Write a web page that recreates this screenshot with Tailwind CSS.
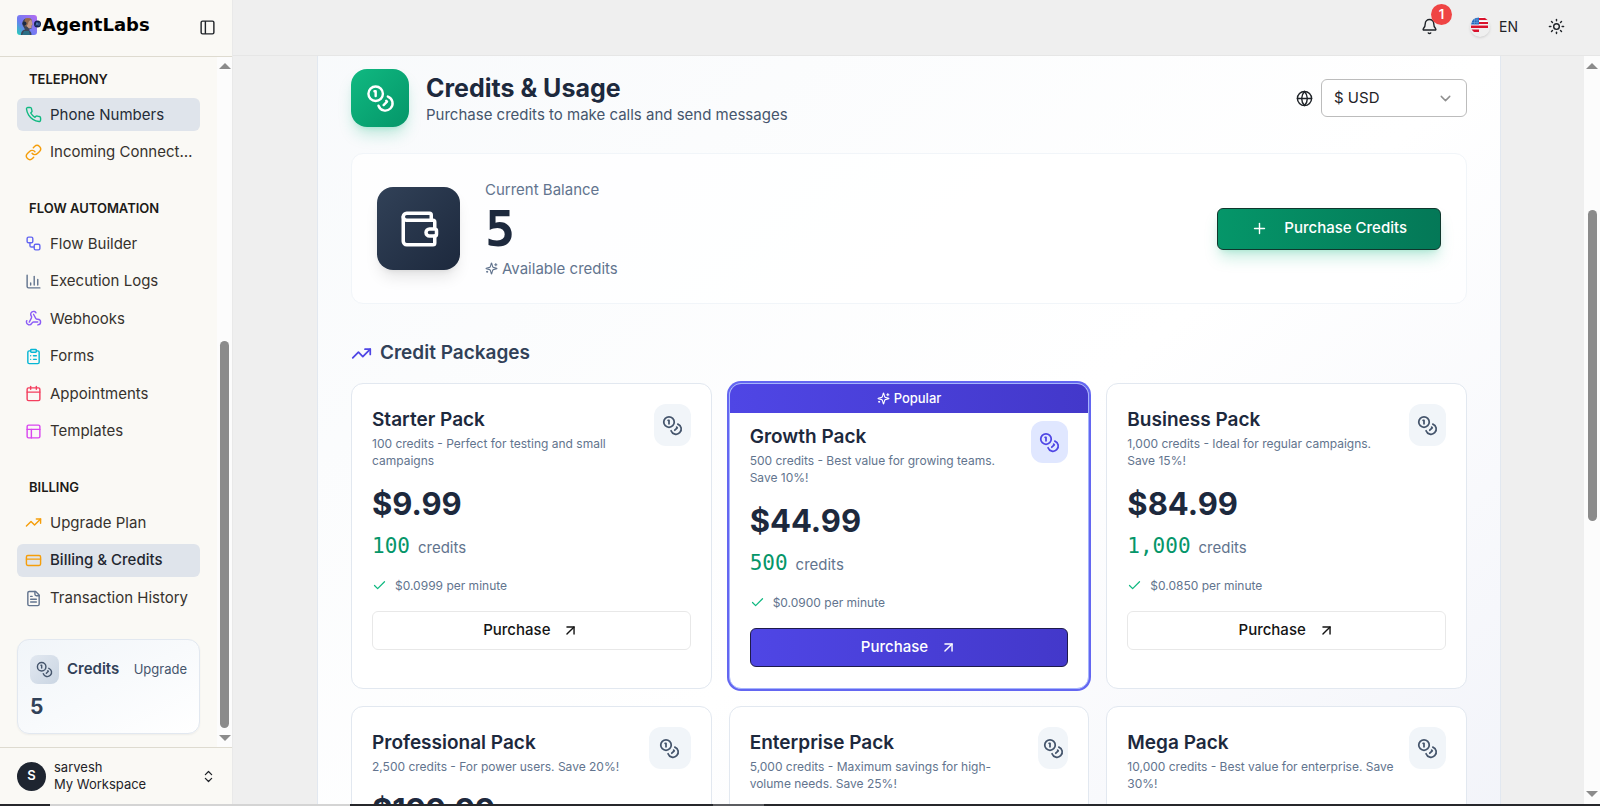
<!DOCTYPE html>
<html lang="en">
<head>
    <meta charset="UTF-8">
    <meta name="viewport" content="width=device-width, initial-scale=1.0">
    <title>AgentLabs - Billing &amp; Credits</title>
    <script src="https://cdn.jsdelivr.net/npm/@tailwindcss/browser@4"></script>
</head>
<body class="h-screen flex flex-col overflow-hidden bg-[#efefef] font-['Inter',sans-serif] text-[15px] text-[#1f2328]">

    <!-- Icons -->
    <svg class="hidden" xmlns="http://www.w3.org/2000/svg">
        <symbol id="coins" viewBox="0 0 24 24"><circle cx="8" cy="8" r="6"/><path d="M18.09 10.37A6 6 0 1 1 10.34 18"/><path d="M7 6h1v4"/><path d="m16.71 13.88.7.71-2.82 2.82"/></symbol>
        <symbol id="sparkles" viewBox="0 0 24 24"><path d="M9.937 15.5A2 2 0 0 0 8.5 14.063l-6.135-1.582a.5.5 0 0 1 0-.962L8.5 9.936A2 2 0 0 0 9.937 8.5l1.582-6.135a.5.5 0 0 1 .963 0L14.063 8.5A2 2 0 0 0 15.5 9.937l6.135 1.581a.5.5 0 0 1 0 .964L15.5 14.063a2 2 0 0 0-1.437 1.437l-1.582 6.135a.5.5 0 0 1-.963 0z"/><path d="M20 3v4"/><path d="M22 5h-4"/><path d="M4 17v2"/><path d="M5 18H3"/></symbol>
        <symbol id="wallet" viewBox="0 0 24 24"><path d="M19 7V4a1 1 0 0 0-1-1H5a2 2 0 0 0 0 4h15a1 1 0 0 1 1 1v4h-3a2 2 0 0 0 0 4h3a1 1 0 0 0 1-1v-2a1 1 0 0 0-1-1"/><path d="M3 5v14a2 2 0 0 0 2 2h15a1 1 0 0 0 1-1v-4"/></symbol>
        <symbol id="phone" viewBox="0 0 24 24"><path d="M22 16.92v3a2 2 0 0 1-2.18 2 19.79 19.79 0 0 1-8.63-3.07 19.5 19.5 0 0 1-6-6 19.79 19.79 0 0 1-3.07-8.67A2 2 0 0 1 4.11 2h3a2 2 0 0 1 2 1.72 12.84 12.84 0 0 0 .7 2.81 2 2 0 0 1-.45 2.11L8.09 9.91a16 16 0 0 0 6 6l1.27-1.27a2 2 0 0 1 2.11-.45 12.84 12.84 0 0 0 2.81.7A2 2 0 0 1 22 16.92z"/></symbol>
        <symbol id="link" viewBox="0 0 24 24"><path d="M10 13a5 5 0 0 0 7.54.54l3-3a5 5 0 0 0-7.07-7.07l-1.72 1.71"/><path d="M14 11a5 5 0 0 0-7.54-.54l-3 3a5 5 0 0 0 7.07 7.07l1.71-1.71"/></symbol>
        <symbol id="workflow" viewBox="0 0 24 24"><rect x="3" y="3" width="8" height="8" rx="2"/><path d="M7 11v4a2 2 0 0 0 2 2h4"/><rect x="13" y="13" width="8" height="8" rx="2"/></symbol>
        <symbol id="chart" viewBox="0 0 24 24"><path d="M3 3v16a2 2 0 0 0 2 2h16"/><path d="M18 17V9"/><path d="M13 17V5"/><path d="M8 17v-3"/></symbol>
        <symbol id="webhook" viewBox="0 0 24 24"><path d="M18 16.98h-5.99c-1.1 0-1.95.94-2.48 1.9A4 4 0 0 1 2 17c.01-.7.2-1.4.57-2"/><path d="m6 17 3.13-5.78c.53-.97.1-2.18-.5-3.1a4 4 0 1 1 6.89-4.06"/><path d="m12 6 3.13 5.73C15.66 12.7 16.9 13 18 13a4 4 0 0 1 0 8"/></symbol>
        <symbol id="clipboard" viewBox="0 0 24 24"><rect x="8" y="2" width="8" height="4" rx="1"/><path d="M16 4h2a2 2 0 0 1 2 2v14a2 2 0 0 1-2 2H6a2 2 0 0 1-2-2V6a2 2 0 0 1 2-2h2"/><path d="M12 11h4"/><path d="M12 16h4"/><path d="M8 11h.01"/><path d="M8 16h.01"/></symbol>
        <symbol id="calendar" viewBox="0 0 24 24"><path d="M8 2v4"/><path d="M16 2v4"/><rect x="3" y="4" width="18" height="18" rx="2"/><path d="M3 10h18"/></symbol>
        <symbol id="template" viewBox="0 0 24 24"><rect x="3" y="3" width="18" height="18" rx="2"/><path d="M3 9h18"/><path d="M9 21V9"/></symbol>
        <symbol id="trending" viewBox="0 0 24 24"><path d="M22 7 13.5 15.5 8.5 10.5 2 17"/><path d="M16 7h6v6"/></symbol>
        <symbol id="card" viewBox="0 0 24 24"><rect x="2" y="5" width="20" height="14" rx="2"/><path d="M2 10h20"/></symbol>
        <symbol id="file" viewBox="0 0 24 24"><path d="M15 2H6a2 2 0 0 0-2 2v16a2 2 0 0 0 2 2h12a2 2 0 0 0 2-2V7Z"/><path d="M14 2v4a2 2 0 0 0 2 2h4"/><path d="M10 9H8"/><path d="M16 13H8"/><path d="M16 17H8"/></symbol>
        <symbol id="panel" viewBox="0 0 24 24"><rect x="3" y="3" width="18" height="18" rx="2"/><path d="M9 3v18"/></symbol>
        <symbol id="updown" viewBox="0 0 24 24"><path d="m7 15 5 5 5-5"/><path d="m7 9 5-5 5 5"/></symbol>
        <symbol id="bell" viewBox="0 0 24 24"><path d="M10.268 21a2 2 0 0 0 3.464 0"/><path d="M3.262 15.326A1 1 0 0 0 4 17h16a1 1 0 0 0 .74-1.673C19.41 13.956 18 12.499 18 8A6 6 0 0 0 6 8c0 4.499-1.411 5.956-2.738 7.326"/></symbol>
        <symbol id="sun" viewBox="0 0 24 24"><circle cx="12" cy="12" r="4"/><path d="M12 2v2"/><path d="M12 20v2"/><path d="m4.93 4.93 1.41 1.41"/><path d="m17.66 17.66 1.41 1.41"/><path d="M2 12h2"/><path d="M20 12h2"/><path d="m6.34 17.66-1.41 1.41"/><path d="m19.07 4.93-1.41 1.41"/></symbol>
        <symbol id="globe" viewBox="0 0 24 24"><circle cx="12" cy="12" r="10"/><path d="M12 2a14.5 14.5 0 0 0 0 20 14.5 14.5 0 0 0 0-20"/><path d="M2 12h20"/></symbol>
        <symbol id="chevron" viewBox="0 0 24 24"><path d="m6 9 6 6 6-6"/></symbol>
        <symbol id="plus" viewBox="0 0 24 24"><path d="M5 12h14"/><path d="M12 5v14"/></symbol>
        <symbol id="check" viewBox="0 0 24 24"><path d="M20 6 9 17l-5-5"/></symbol>
        <symbol id="arrow" viewBox="0 0 24 24"><path d="M7 7h10v10"/><path d="M7 17 17 7"/></symbol>
        <symbol id="tri-up" viewBox="0 0 12 6"><path d="M0 6 6 0l6 6z"/></symbol>
        <symbol id="tri-down" viewBox="0 0 12 6"><path d="M0 0h12L6 6z"/></symbol>
    </svg>

    <div class="flex-1 min-h-0 flex">

        <!-- Sidebar -->
        <aside class="w-[233px] shrink-0 flex flex-col bg-[#faf9f5] border-r border-[#e9e9e9]">
            <div class="h-[57px] shrink-0 flex items-center justify-between pl-[17px] pr-4 pb-[2px] border-b border-[#dedbd0]">
                <a href="#" class="flex items-center gap-1 pb-1">
                    <svg class="w-[25px] h-5 -mr-1" viewBox="0 0 25 20">
                        <defs>
                            <linearGradient id="logo-bg" x1="0" y1="1" x2="1" y2="0">
                                <stop offset="0" stop-color="#22d3b6"/>
                                <stop offset=".4" stop-color="#6d7df2"/>
                                <stop offset="1" stop-color="#b46bf0"/>
                            </linearGradient>
                        </defs>
                        <rect width="20" height="20" rx="3" fill="url(#logo-bg)"/>
                        <path d="M4 20c0-4 2-5 4-5.500L6 11c-2-4 1-8 4.500-8S15.500 5 15 8l.5 2-1 .5v3l-2 .5v2c1.500.5 2 2 2 4z" fill="#3d4658"/>
                        <path d="M8 4c3-2 7-.5 7 3l.5 3-1 .5v2.500l-2.500.5L9.500 11z" fill="#c69a86"/>
                        <path d="M8 4c2-2 6-1 6.500 1-2 0-3 1-3.500 4l-2 3-2-3z" fill="#94694b"/>
                        <circle cx="7.500" cy="8.500" r="2" fill="#1d2a44"/>
                        <path d="M7 16h5l1 4H5z" fill="#2b6f86"/>
                        <circle cx="20.500" cy="9" r="3.500" fill="#14224f"/>
                        <path d="M19 10.500l1-3 1 3M22 7.500v3" fill="none" stroke="#6fa8e8" stroke-width=".7"/>
                    </svg>
                    <span class="text-[18px] leading-5 font-bold text-black font-['DejaVu_Sans',sans-serif]">AgentLabs</span>
                </a>
                <button type="button" aria-label="Toggle sidebar">
                    <svg class="size-[17px] fill-none stroke-current stroke-2"><use href="#panel"/></svg>
                </button>
            </div>

            <div class="flex-1 min-h-0 flex">
                <nav class="flex-1 min-w-0 overflow-hidden flex flex-col gap-[22px] px-[17px] pt-[7px] text-[#36322d]">
                    <section>
                        <h3 class="h-8 flex items-center px-3 text-[13px] font-semibold text-[#1c1b18]">TELEPHONY</h3>
                        <ul class="h-[75px] grid grid-cols-1 items-center">
                            <li><a href="#" class="h-[33px] flex items-center gap-2 pl-2 pr-1 rounded-md bg-[#dfe4eb] text-[#252c37]"><svg class="size-[17px] shrink-0 fill-none stroke-[#10b981] stroke-2" stroke-linecap="round" stroke-linejoin="round"><use href="#phone"/></svg><span>Phone Numbers</span></a></li>
                            <li><a href="#" class="h-[33px] flex items-center gap-2 pl-2 pr-1 rounded-md"><svg class="size-[17px] shrink-0 fill-none stroke-[#f59e0b] stroke-2" stroke-linecap="round" stroke-linejoin="round"><use href="#link"/></svg><span class="truncate">Incoming Connections</span></a></li>
                        </ul>
                    </section>
                    <section>
                        <h3 class="h-8 flex items-center px-3 text-[13px] font-semibold text-[#1c1b18]">FLOW AUTOMATION</h3>
                        <ul class="h-[225px] grid grid-cols-1 items-center">
                            <li><a href="#" class="h-[33px] flex items-center gap-2 pl-2 pr-1 rounded-md"><svg class="size-[17px] shrink-0 fill-none stroke-[#6366f1] stroke-2" stroke-linecap="round" stroke-linejoin="round"><use href="#workflow"/></svg><span>Flow Builder</span></a></li>
                            <li><a href="#" class="h-[33px] flex items-center gap-2 pl-2 pr-1 rounded-md"><svg class="size-[17px] shrink-0 fill-none stroke-slate-500 stroke-2" stroke-linecap="round" stroke-linejoin="round"><use href="#chart"/></svg><span>Execution Logs</span></a></li>
                            <li><a href="#" class="h-[33px] flex items-center gap-2 pl-2 pr-1 rounded-md"><svg class="size-[17px] shrink-0 fill-none stroke-[#8b5cf6] stroke-2" stroke-linecap="round" stroke-linejoin="round"><use href="#webhook"/></svg><span>Webhooks</span></a></li>
                            <li><a href="#" class="h-[33px] flex items-center gap-2 pl-2 pr-1 rounded-md"><svg class="size-[17px] shrink-0 fill-none stroke-[#06b6d4] stroke-2" stroke-linecap="round" stroke-linejoin="round"><use href="#clipboard"/></svg><span>Forms</span></a></li>
                            <li><a href="#" class="h-[33px] flex items-center gap-2 pl-2 pr-1 rounded-md"><svg class="size-[17px] shrink-0 fill-none stroke-[#f43f5e] stroke-2" stroke-linecap="round" stroke-linejoin="round"><use href="#calendar"/></svg><span>Appointments</span></a></li>
                            <li><a href="#" class="h-[33px] flex items-center gap-2 pl-2 pr-1 rounded-md"><svg class="size-[17px] shrink-0 fill-none stroke-[#d946ef] stroke-2" stroke-linecap="round" stroke-linejoin="round"><use href="#template"/></svg><span>Templates</span></a></li>
                        </ul>
                    </section>
                    <section>
                        <h3 class="h-8 flex items-center px-3 text-[13px] font-semibold text-[#1c1b18]">BILLING</h3>
                        <ul class="h-[113px] grid grid-cols-1 items-center">
                            <li><a href="#" class="h-[33px] flex items-center gap-2 pl-2 pr-1 rounded-md"><svg class="size-[17px] shrink-0 fill-none stroke-[#f59e0b] stroke-2" stroke-linecap="round" stroke-linejoin="round"><use href="#trending"/></svg><span>Upgrade Plan</span></a></li>
                            <li><a href="#" class="h-[33px] flex items-center gap-2 pl-2 pr-1 rounded-md bg-[#dfe4eb] text-[#1f2630] font-medium"><svg class="size-[17px] shrink-0 fill-none stroke-[#f59e0b] stroke-2" stroke-linecap="round" stroke-linejoin="round"><use href="#card"/></svg><span>Billing &amp; Credits</span></a></li>
                            <li><a href="#" class="h-[33px] flex items-center gap-2 pl-2 pr-1 rounded-md"><svg class="size-[17px] shrink-0 fill-none stroke-slate-500 stroke-2" stroke-linecap="round" stroke-linejoin="round"><use href="#file"/></svg><span>Transaction History</span></a></li>
                        </ul>
                    </section>

                    <div class="h-[95px] shrink-0 px-3 pt-[15px] rounded-xl border border-slate-200 bg-linear-to-br from-slate-100 to-white shadow-xs text-slate-700">
                        <div class="flex items-center">
                            <span class="size-[29px] flex items-center justify-center rounded-lg bg-linear-to-br from-slate-200 to-slate-300">
                                <svg class="size-[17px] fill-none stroke-slate-600 stroke-2" stroke-linecap="round" stroke-linejoin="round"><use href="#coins"/></svg>
                            </span>
                            <span class="ml-2 font-semibold">Credits</span>
                            <a href="#" class="ml-auto text-[13px] text-slate-600">Upgrade</a>
                        </div>
                        <p class="mt-[9px] text-[21px] leading-7 font-bold">5</p>
                    </div>
                </nav>

                <!-- Sidebar scrollbar -->
                <div class="w-[15px] flex flex-col items-center py-[6px] bg-[#fcfcfc]">
                    <svg class="w-3 h-[6px] fill-[#8b8b8b]"><use href="#tri-up"/></svg>
                    <div class="w-[9px] h-[387px] mt-auto mb-[7px] rounded-full bg-[#8b8b8b]"></div>
                    <svg class="w-3 h-[6px] fill-[#8b8b8b]"><use href="#tri-down"/></svg>
                </div>
            </div>

            <button type="button" class="h-[57px] shrink-0 flex items-center gap-2 pl-[17px] pr-4 border-t border-[#dedbd0] text-left">
                <span class="size-[29px] flex items-center justify-center rounded-full bg-[#1e2530] text-white text-[13px] font-semibold">S</span>
                <span class="flex-1 text-[13px] leading-[17px]">
                    <span class="block">sarvesh</span>
                    <span class="block">My Workspace</span>
                </span>
                <svg class="size-[15px] fill-none stroke-current stroke-2" stroke-linecap="round" stroke-linejoin="round"><use href="#updown"/></svg>
            </button>
        </aside>

        <div class="flex-1 min-w-0 flex flex-col">

            <!-- Top bar -->
            <header class="h-14 shrink-0 flex items-center justify-end pr-[35px] pb-[2px] border-b border-[#e6e6e6]">
                <button type="button" aria-label="Notifications" class="relative">
                    <svg class="size-[17px] fill-none stroke-current stroke-2" stroke-linecap="round" stroke-linejoin="round"><use href="#bell"/></svg>
                    <span class="absolute -top-[14px] left-[10px] size-[21px] flex items-center justify-center rounded-full bg-[#ef4444] text-white text-[13px] font-semibold">1</span>
                </button>
                <button type="button" class="ml-8 flex items-center gap-[9px] text-[14px]">
                    <span class="size-5 flex rounded-full shadow-sm">
                        <svg class="size-5" viewBox="0 0 20 20">
                            <path d="M1 8a9 9 0 0 1 8-8h4l4 3H9v1h8.500l.5 3H9v1h9v3H1z" fill="#fff"/>
                            <path d="M1 7.500Q2 .5 9 .5v7z" fill="#2468bd"/>
                            <path d="M3.500 3H9M2 5.500h7M4.500 2v5.500M7 1v6.500" stroke="#6fa5dc" stroke-width=".6"/>
                            <path d="M9 1h6l2.500 2H9zM9 5h9v2H9zM1 8.500h17v2.500H1zM1.500 12.500H9V15H4z" fill="#d9122c"/>
                        </svg>
                    </span>
                    <span>EN</span>
                </button>
                <button type="button" aria-label="Toggle theme" class="ml-[30px]">
                    <svg class="size-[17px] fill-none stroke-current stroke-2" stroke-linecap="round" stroke-linejoin="round"><use href="#sun"/></svg>
                </button>
            </header>

            <div class="flex-1 min-h-0 flex">
                <main class="flex-1 min-w-0 overflow-hidden pl-[84px] pr-[83px]">
                    <div class="px-[33px] pt-[13px] pb-8 border-x border-slate-200 bg-linear-to-br from-slate-50 via-white to-[#eff1f8]">

                        <!-- Title -->
                        <div class="flex items-center justify-between">
                            <div class="flex items-center gap-[17px]">
                                <span class="size-[58px] flex items-center justify-center rounded-2xl bg-linear-to-br from-[#10b981] to-[#059669] shadow-lg shadow-[#10b981]/25">
                                    <svg class="size-[29px] fill-none stroke-white stroke-2" stroke-linecap="round" stroke-linejoin="round"><use href="#coins"/></svg>
                                </span>
                                <div>
                                    <h1 class="text-[25px] leading-8 font-bold text-slate-800">Credits &amp; Usage</h1>
                                    <p class="leading-[21px] text-slate-600">Purchase credits to make calls and send messages</p>
                                </div>
                            </div>
                            <div class="flex items-center gap-2">
                                <label for="currency" aria-label="Currency">
                                    <svg class="size-[17px] fill-none stroke-current stroke-2" stroke-linecap="round" stroke-linejoin="round"><use href="#globe"/></svg>
                                </label>
                                <div class="relative">
                                    <select id="currency" class="w-[146px] h-[38px] pl-3 appearance-none rounded-md border border-[#bcbcbc] bg-white">
                                        <option>$ USD</option>
                                    </select>
                                    <svg class="absolute right-[13px] top-[11px] size-[17px] pointer-events-none fill-none stroke-[#8f8f8f] stroke-2" stroke-linecap="round" stroke-linejoin="round"><use href="#chevron"/></svg>
                                </div>
                            </div>
                        </div>

                        <!-- Balance -->
                        <div class="mt-[26px] h-[151px] px-[25px] flex items-center gap-[25px] rounded-xl border border-slate-100 bg-white/80">
                            <span class="size-[83px] flex items-center justify-center rounded-2xl bg-linear-to-br from-slate-700 to-slate-800 shadow-lg">
                                <svg class="size-[42px] fill-none stroke-white stroke-2" stroke-linecap="round" stroke-linejoin="round"><use href="#wallet"/></svg>
                            </span>
                            <div class="text-slate-500">
                                <p class="leading-[21px]">Current Balance</p>
                                <p class="py-1 text-[50px] leading-[50px] font-bold text-slate-800 font-['DejaVu_Sans_Mono',monospace]">5</p>
                                <p class="flex items-center gap-1 leading-[21px]"><svg class="size-[13px] fill-none stroke-current stroke-2" stroke-linecap="round" stroke-linejoin="round"><use href="#sparkles"/></svg>Available credits</p>
                            </div>
                            <button type="button" class="ml-auto h-[42px] px-[33px] flex items-center gap-4 rounded-md border border-[#10372d] bg-linear-to-r from-[#059669] to-[#047857] shadow-lg shadow-[#10b981]/25 text-white font-medium">
                                <svg class="size-[17px] fill-none stroke-current stroke-2" stroke-linecap="round"><use href="#plus"/></svg>
                                Purchase Credits
                            </button>
                        </div>

                        <!-- Packages -->
                        <h2 class="mt-[34px] mb-[15px] flex items-center gap-2 text-[19px] leading-[30px] font-semibold text-slate-700">
                            <svg class="size-[21px] fill-none stroke-[#4f46e5] stroke-2" stroke-linecap="round" stroke-linejoin="round"><use href="#trending"/></svg>
                            Credit Packages
                        </h2>
                        <div id="packages" class="grid grid-cols-3 gap-[17px]"></div>
                    </div>
                </main>

                <!-- Page scrollbar -->
                <div class="w-4 shrink-0 flex flex-col items-center py-[7px] bg-[#fcfcfc]">
                    <svg class="w-3 h-[6px] fill-[#8b8b8b]"><use href="#tri-up"/></svg>
                    <div class="w-[9px] h-[311px] mt-[141px] mb-auto rounded-full bg-[#8b8b8b]"></div>
                    <svg class="w-3 h-[6px] fill-[#8b8b8b]"><use href="#tri-down"/></svg>
                </div>
            </div>
        </div>
    </div>

    <!-- Bottom edge -->
    <div class="h-[2px] shrink-0 flex bg-[#26272b]">
        <div class="w-[300px] ml-[50px] bg-[#d4d4d4]"></div>
        <div class="w-[51px] ml-[363px] bg-[#5b5c60]"></div>
    </div>

    <script>
        const packages = [
            { name: "Starter Pack", desc: "100 credits - Perfect for testing and small campaigns", price: "$9.99", credits: "100", rate: "$0.0999", iconWidth: "w-[37px]" },
            { name: "Growth Pack", desc: "500 credits - Best value for growing teams. Save 10%!", price: "$44.99", credits: "500", rate: "$0.0900", iconWidth: "w-[37px]", popular: true },
            { name: "Business Pack", desc: "1,000 credits - Ideal for regular campaigns. Save 15%!", price: "$84.99", credits: "1,000", rate: "$0.0850", iconWidth: "w-[37px]" },
            { name: "Professional Pack", desc: "2,500 credits - For power users. Save 20%!", price: "$199.99", credits: "2,500", rate: "$0.0800", iconWidth: "w-[42px]" },
            { name: "Enterprise Pack", desc: "5,000 credits - Maximum savings for high-volume needs. Save 25%!", price: "$374.99", credits: "5,000", rate: "$0.0750", iconWidth: "w-[30px]" },
            { name: "Mega Pack", desc: "10,000 credits - Best value for enterprise. Save 30%!", price: "$699.99", credits: "10,000", rate: "$0.0700", iconWidth: "w-[37px]" }
        ];

        const banner = `
            <div class="h-[29px] flex items-center justify-center gap-1 bg-linear-to-r from-[#4f46e5] to-[#4338ca] text-white text-[13px] font-medium">
                <svg class="size-[13px] fill-none stroke-current stroke-2" stroke-linecap="round" stroke-linejoin="round"><use href="#sparkles"/></svg>Popular
            </div>`;

        document.getElementById("packages").innerHTML = packages.map(p => `
            <article class="overflow-hidden rounded-xl border bg-white ${p.popular ? "border-[#a5b4fc] ring-2 ring-[#6366f1]" : "border-slate-200"}">
                ${p.popular ? banner : ""}
                <div class="px-5 pb-[21px] ${p.popular ? "pt-2" : "pt-5"}">
                    <div class="flex items-start justify-between gap-2">
                        <div>
                            <h3 class="text-[19px] leading-[31px] font-semibold text-slate-800">${p.name}</h3>
                            <p class="text-[12px] leading-[17px] text-slate-500">${p.desc}</p>
                        </div>
                        <span class="${p.iconWidth} h-[42px] shrink-0 flex items-center justify-center rounded-xl ${p.popular ? "bg-[#e0e7ff] text-[#4f46e5]" : "bg-slate-100 text-slate-600"}">
                            <svg class="size-[21px] shrink-0 fill-none stroke-current stroke-2" stroke-linecap="round" stroke-linejoin="round"><use href="#coins"/></svg>
                        </span>
                    </div>
                    <p class="mt-4 text-[31px] leading-[38px] font-bold text-slate-800">${p.price}</p>
                    <p class="mt-2 flex items-baseline gap-2 leading-[31px] text-slate-500">
                        <span class="text-[21px] text-[#059669] font-['DejaVu_Sans_Mono',monospace]">${p.credits}</span>credits
                    </p>
                    <p class="mt-3 flex items-center gap-2 text-[12px] leading-[21px] text-slate-500">
                        <svg class="size-[15px] fill-none stroke-[#10b981] stroke-2" stroke-linecap="round" stroke-linejoin="round"><use href="#check"/></svg>${p.rate} per minute
                    </p>
                    <button type="button" class="mt-[15px] w-full h-[39px] flex items-center justify-center gap-3 rounded-md border font-medium ${p.popular ? "border-[#1e1b4b] bg-linear-to-r from-[#4f46e5] to-[#4338ca] text-white" : "border-[#e8e8e8] bg-white text-[#141414]"}">
                        Purchase
                        <svg class="size-[17px] fill-none stroke-current stroke-2" stroke-linecap="round" stroke-linejoin="round"><use href="#arrow"/></svg>
                    </button>
                </div>
            </article>`).join("");
    </script>
</body>
</html>
